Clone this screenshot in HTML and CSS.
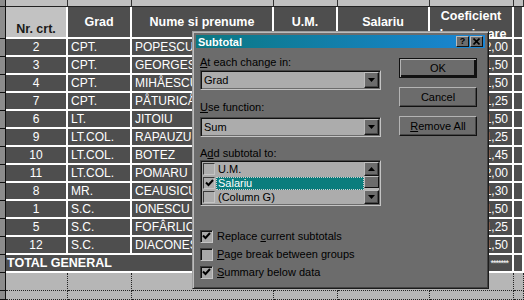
FILE: index.html
```html
<!DOCTYPE html>
<html>

<head>
  <title>Subtotal</title>
  <link rel="stylesheet" href="styles.css">
</head>

<body>
  <div class="sheet">
    <div class="row colbar">
      <div class="rh"></div>
      <div class="ch"></div><div class="ch"></div><div class="ch"></div><div class="ch"></div>
      <div class="ch"></div><div class="ch"></div><div class="ch"></div>
    </div>

    <div class="row head">
      <div class="rh"></div>
      <div class="cell nr">Nr. crt.</div>
      <div class="cell">Grad</div>
      <div class="cell">Nume si prenume</div>
      <div class="cell">U.M.</div>
      <div class="cell">Salariu</div>
      <div class="cell coef">Coeficient<br>de majorare</div>
      <div class="cell"></div>
    </div>

    <div class="row data">
      <div class="rh"></div>
      <div class="cell num">2</div><div class="cell txt">CPT.</div><div class="cell txt">POPESCU</div>
      <div class="cell"></div><div class="cell"></div><div class="cell val">2,00</div><div class="cell"></div>
    </div>
    <div class="row data">
      <div class="rh"></div>
      <div class="cell num">3</div><div class="cell txt">CPT.</div><div class="cell txt">GEORGESCU</div>
      <div class="cell"></div><div class="cell"></div><div class="cell val">1,50</div><div class="cell"></div>
    </div>
    <div class="row data">
      <div class="rh"></div>
      <div class="cell num">4</div><div class="cell txt">CPT.</div><div class="cell txt">MIHÅESCU</div>
      <div class="cell"></div><div class="cell"></div><div class="cell val">1,50</div><div class="cell"></div>
    </div>
    <div class="row data">
      <div class="rh"></div>
      <div class="cell num">7</div><div class="cell txt">CPT.</div><div class="cell txt">PÅTURICÅ</div>
      <div class="cell"></div><div class="cell"></div><div class="cell val">1,25</div><div class="cell"></div>
    </div>
    <div class="row data">
      <div class="rh"></div>
      <div class="cell num">6</div><div class="cell txt">LT.</div><div class="cell txt">JITOIU</div>
      <div class="cell"></div><div class="cell"></div><div class="cell val">1,50</div><div class="cell"></div>
    </div>
    <div class="row data">
      <div class="rh"></div>
      <div class="cell num">9</div><div class="cell txt">LT.COL.</div><div class="cell txt">RAPAUZU</div>
      <div class="cell"></div><div class="cell"></div><div class="cell val">1,25</div><div class="cell"></div>
    </div>
    <div class="row data">
      <div class="rh"></div>
      <div class="cell num">10</div><div class="cell txt">LT.COL.</div><div class="cell txt">BOTEZ</div>
      <div class="cell"></div><div class="cell"></div><div class="cell val">1,45</div><div class="cell"></div>
    </div>
    <div class="row data">
      <div class="rh"></div>
      <div class="cell num">11</div><div class="cell txt">LT.COL.</div><div class="cell txt">POMARU</div>
      <div class="cell"></div><div class="cell"></div><div class="cell val">2,00</div><div class="cell"></div>
    </div>
    <div class="row data">
      <div class="rh"></div>
      <div class="cell num">8</div><div class="cell txt">MR.</div><div class="cell txt">CEAUSICU</div>
      <div class="cell"></div><div class="cell"></div><div class="cell val">1,30</div><div class="cell"></div>
    </div>
    <div class="row data">
      <div class="rh"></div>
      <div class="cell num">1</div><div class="cell txt">S.C.</div><div class="cell txt">IONESCU</div>
      <div class="cell"></div><div class="cell"></div><div class="cell val">1,50</div><div class="cell"></div>
    </div>
    <div class="row data">
      <div class="rh"></div>
      <div class="cell num">5</div><div class="cell txt">S.C.</div><div class="cell txt">FOFÂRLICÅ</div>
      <div class="cell"></div><div class="cell"></div><div class="cell val">1,25</div><div class="cell"></div>
    </div>
    <div class="row data">
      <div class="rh"></div>
      <div class="cell num">12</div><div class="cell txt">S.C.</div><div class="cell txt">DIACONESCU</div>
      <div class="cell"></div><div class="cell"></div><div class="cell val">1,50</div><div class="cell"></div>
    </div>

    <div class="row data total">
      <div class="rh"></div>
      <div class="cell label">TOTAL GENERAL</div>
      <div class="cell"></div><div class="cell"></div><div class="cell val stars">*******</div><div class="cell"></div>
    </div>

    <div class="row blank">
      <div class="rh"></div>
      <div class="gc"></div><div class="gc"></div><div class="gc"></div><div class="gc"></div>
      <div class="gc"></div><div class="gc"></div><div class="gc"></div>
    </div>
    <div class="row blank last">
      <div class="rh"></div>
      <div class="gc"></div><div class="gc"></div><div class="gc"></div><div class="gc"></div>
      <div class="gc"></div><div class="gc"></div><div class="gc"></div>
    </div>
  </div>

  <!-- Subtotal dialog over the sheet -->
  <div class="dialog">
    <div class="titlebar">
      <span class="title">Subtotal</span>
      <span class="tbtns">
        <span class="tbtn">?</span>
        <span class="tbtn">
          <svg width="7" height="7" viewBox="0 0 7 7"><path d="M0.5 0.5 L6.5 6.5 M6.5 0.5 L0.5 6.5" stroke="#000" stroke-width="1.6"/></svg>
        </span>
      </span>
    </div>

    <div class="dlg-body">
      <div class="dlg-left">
        <div class="lbl first"><u>A</u>t each change in:</div>
        <div class="combo">
          <span class="combo-val">Grad</span>
          <span class="drop"><svg width="7" height="4" viewBox="0 0 7 4"><polygon points="0,0 7,0 3.5,4" fill="#000"/></svg></span>
        </div>

        <div class="lbl second"><u>U</u>se function:</div>
        <div class="combo combo2">
          <span class="combo-val">Sum</span>
          <span class="drop"><svg width="7" height="4" viewBox="0 0 7 4"><polygon points="0,0 7,0 3.5,4" fill="#000"/></svg></span>
        </div>

        <div class="lbl third">A<u>d</u>d subtotal to:</div>
        <div class="listbox">
          <div class="items">
            <div class="item"><span class="lcb"></span><span class="itext">U.M.</span></div>
            <div class="item sel">
              <span class="lcb"><svg width="9" height="8" viewBox="0 0 9 8"><path d="M1 3.5 L3.5 6 L8 1" fill="none" stroke="#000" stroke-width="2"/></svg></span>
              <span class="itext">Salariu</span>
            </div>
            <div class="item"><span class="lcb"></span><span class="itext">(Column G)</span></div>
          </div>
          <div class="vscroll">
            <span class="sbtn"><svg width="7" height="4" viewBox="0 0 7 4"><polygon points="0,4 7,4 3.5,0" fill="#000"/></svg></span>
            <span class="thumb"></span>
            <span class="track"></span>
            <span class="sbtn"><svg width="7" height="4" viewBox="0 0 7 4"><polygon points="0,0 7,0 3.5,4" fill="#000"/></svg></span>
          </div>
        </div>

        <div class="checks">
          <div class="chk">
            <span class="box"><svg width="9" height="8" viewBox="0 0 9 8"><path d="M1 3.5 L3.5 6 L8 1" fill="none" stroke="#000" stroke-width="2"/></svg></span>
            <span>Replace <u>c</u>urrent subtotals</span>
          </div>
          <div class="chk">
            <span class="box"></span>
            <span><u>P</u>age break between groups</span>
          </div>
          <div class="chk">
            <span class="box"><svg width="9" height="8" viewBox="0 0 9 8"><path d="M1 3.5 L3.5 6 L8 1" fill="none" stroke="#000" stroke-width="2"/></svg></span>
            <span><u>S</u>ummary below data</span>
          </div>
        </div>
      </div>

      <div class="dlg-right">
        <div class="btn default">OK</div>
        <div class="btn">Cancel</div>
        <div class="btn"><u>R</u>emove All</div>
      </div>
    </div>
  </div>
</body>

</html>
```

FILE: styles.css
```css
body {
margin: 0;
width: 524px;
height: 300px;
overflow: hidden;
position: relative;
background-color: #b6b6b6;
font-family: "Liberation Sans", Arial, sans-serif;
}

.sheet {
display: flex;
flex-direction: column;
height: 300px;
}

.row {
display: grid;
grid-template-columns: 6px 62px 64px 142px 64px 92px 84px 1fr;
}

.row > div {
box-sizing: border-box;
overflow: hidden;
white-space: nowrap;
}

.rh {
background-color: #8c8c8c;
border-right: 1px solid #111;
border-bottom: 1px solid #111;
}

.colbar {
height: 7px;
}

.colbar .ch {
background-color: #c0c0c0;
border-right: 1px solid #333;
border-bottom: 1px solid #222;
}

.cell {
background-color: #4e4e4e;
color: #fff;
border-right: 2px solid #fff;
border-bottom: 2px solid #fff;
font-size: 12px;
line-height: 16px;
}

.head {
height: 32px;
}

.head .cell {
display: flex;
align-items: center;
justify-content: center;
font-weight: bold;
font-size: 12.5px;
}

.head .nr {
background-color: #c2c2c2;
color: #1a1a1a;
align-items: flex-end;
line-height: 14px;
padding-bottom: 1px;
}

.head .coef {
display: block;
text-align: center;
line-height: 18px;
padding-top: 0;
}

.data {
height: 18px;
}

.num {
text-align: center;
}

.txt {
padding-left: 3px;
}

.val {
text-align: right;
padding-right: 4px;
}

.total .label {
grid-column: span 3;
font-weight: bold;
font-size: 12.5px;
padding-left: 1px;
}

.stars {
font-size: 9px;
letter-spacing: -1px;
}

.blank {
height: 18px;
}

.blank .gc {
background-color: #b6b6b6;
border-right: 1px dotted #222;
border-bottom: 1px dotted #222;
}

.blank.last {
flex: 1;
}

/* dialog */

.dialog {
position: absolute;
left: 192px;
top: 31px;
width: 297px;
height: 258px;
box-sizing: border-box;
padding: 3px;
background-color: #6c6c6c;
border: 1px solid;
border-color: #9e9e9e #1c1c1c #1c1c1c #9e9e9e;
box-shadow: inset 1px 1px #bcbcbc, inset -1px -1px #444;
font-size: 11px;
color: #000;
}

.titlebar {
height: 13px;
display: flex;
align-items: center;
justify-content: space-between;
padding: 0 2px 0 2px;
background: linear-gradient(to right, #0b7882, #1a86d6);
}

.title {
color: #fff;
font-weight: bold;
font-size: 11px;
}

.tbtns {
display: flex;
gap: 1px;
}

.tbtn {
width: 13px;
height: 11px;
box-sizing: border-box;
display: flex;
align-items: center;
justify-content: center;
background-color: #6c6c6c;
border: 1px solid;
border-color: #bcbcbc #111 #111 #bcbcbc;
font-size: 9px;
line-height: 9px;
font-weight: bold;
}

.dlg-body {
display: flex;
padding: 7px 0 0 4px;
}

.dlg-left {
width: 181px;
display: flex;
flex-direction: column;
}

.lbl {
height: 14px;
line-height: 14px;
}

.lbl.second {
margin-top: 10px;
}

.lbl.third {
margin-top: 9px;
}

.combo {
margin-top: 1px;
height: 20px;
box-sizing: border-box;
display: flex;
align-items: center;
justify-content: space-between;
background-color: #acacac;
border: 1px solid;
border-color: #474747 #c4c4c4 #c4c4c4 #474747;
box-shadow: inset 1px 1px #111, inset -1px -1px #6c6c6c;
padding: 1px 1px 1px 3px;
}

.combo2 {
margin-top: 3px;
}

.drop,
.sbtn {
width: 15px;
height: 16px;
box-sizing: border-box;
display: flex;
align-items: center;
justify-content: center;
background-color: #6c6c6c;
border: 1px solid;
border-color: #bcbcbc #111 #111 #bcbcbc;
box-shadow: inset -1px -1px #474747;
}

.listbox {
height: 46px;
box-sizing: border-box;
display: flex;
background-color: #acacac;
border: 1px solid;
border-color: #474747 #c4c4c4 #c4c4c4 #474747;
box-shadow: inset 1px 1px #111, inset -1px -1px #6c6c6c;
padding: 1px;
}

.items {
flex: 1;
display: flex;
flex-direction: column;
}

.item {
height: 14px;
display: flex;
align-items: center;
}

.lcb {
width: 12px;
height: 12px;
box-sizing: border-box;
margin: 0 1px 0 1px;
display: flex;
align-items: center;
justify-content: center;
background-color: #acacac;
border: 1px solid;
border-color: #3a3a3a #c4c4c4 #c4c4c4 #3a3a3a;
}

.itext {
flex: 1;
height: 13px;
line-height: 13px;
padding-left: 2px;
}

.sel .itext {
background-color: #0a7d7d;
color: #fff;
outline: 1px dotted #d0d0d0;
outline-offset: -1px;
}

.vscroll {
width: 15px;
display: flex;
flex-direction: column;
}

.vscroll .sbtn {
height: 14px;
}

.thumb {
height: 12px;
box-sizing: border-box;
background-color: #6c6c6c;
border: 1px solid;
border-color: #bcbcbc #111 #111 #bcbcbc;
}

.track {
flex: 1;
background-color: #b8b8b8;
}

.checks {
margin-top: 21px;
display: flex;
flex-direction: column;
}

.chk {
height: 18px;
display: flex;
align-items: center;
}

.box {
width: 13px;
height: 13px;
box-sizing: border-box;
margin-right: 4px;
display: flex;
align-items: center;
justify-content: center;
background-color: #a8a8a8;
border: 1px solid;
border-color: #3a3a3a #c4c4c4 #c4c4c4 #3a3a3a;
box-shadow: inset 1px 1px #111;
}

.dlg-right {
margin-left: 18px;
width: 78px;
padding-top: 3px;
display: flex;
flex-direction: column;
gap: 9px;
}

.btn {
height: 20px;
box-sizing: border-box;
display: flex;
align-items: center;
justify-content: center;
background-color: #6c6c6c;
border: 1px solid;
border-color: #b4b4b4 #111 #111 #b4b4b4;
box-shadow: inset -1px -1px #474747;
}

.btn.default {
border-color: #111;
box-shadow: inset 1px 1px #b4b4b4, inset -2px -2px #111;
}
```
